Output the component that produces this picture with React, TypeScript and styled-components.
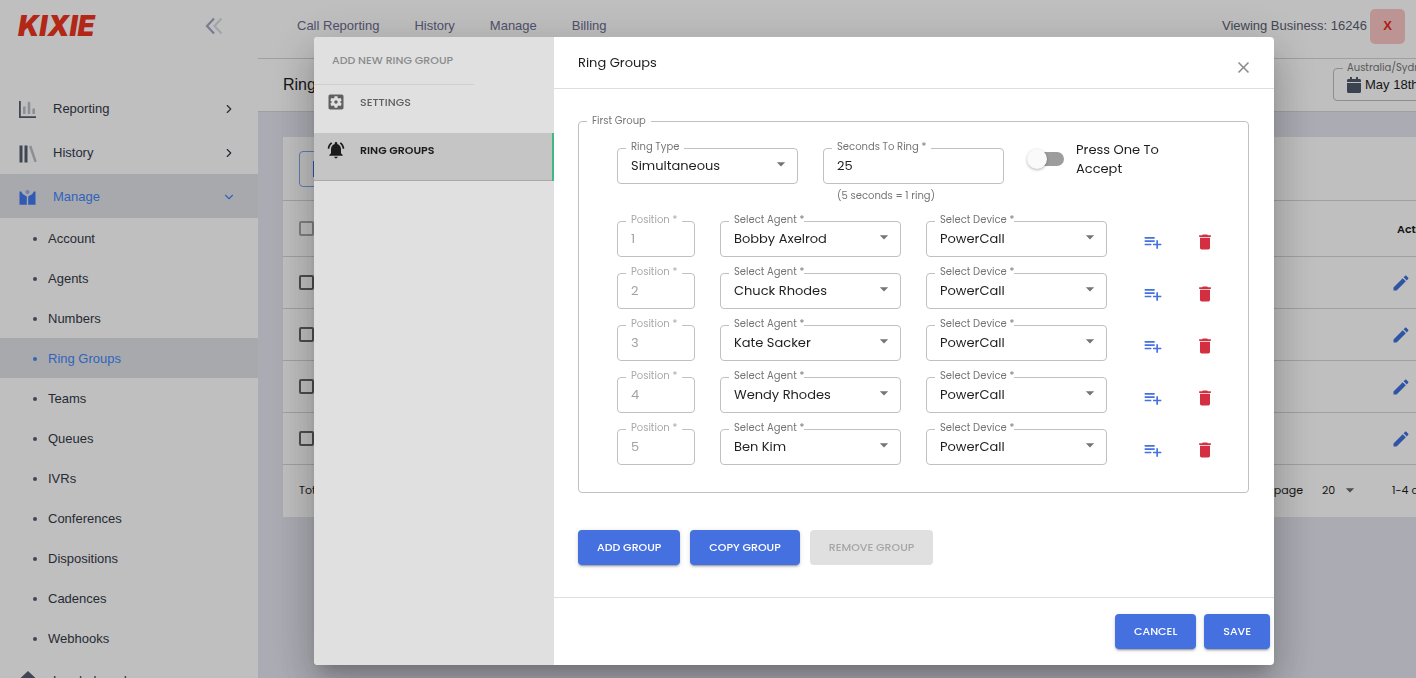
import React, { useState } from "react";
import styled, { createGlobalStyle } from "styled-components";
import { MdArrowDropDown, MdClose, MdDelete } from "react-icons/md";
import { FaCalendar } from "react-icons/fa";
import { ChevronDown, ChevronRight } from "lucide-react";

const body = `"Poppins", Inter, sans-serif`;
const nav = `"Helvetica Neue", "Liberation Sans", Arial, sans-serif`;

const GlobalStyle = createGlobalStyle`
  *, *::before, *::after { box-sizing: border-box; }
  html, body, #root { height: 100%; }
  body { margin: 0; overflow: hidden; background: #e4e4ef; font: 400 13px/20px ${nav}; color: #1d1d1d; }
  button, input, select { font: inherit; color: inherit; margin: 0; }
  button { border: 0; padding: 0; background: none; cursor: pointer; }
  svg { display: block; }
`;

const Page = styled.div`
  display: flex;
  height: 100vh;
  overflow: hidden;
`;

/* ---------- left navigation ---------- */

const Sidebar = styled.aside`
  flex: 0 0 258px;
  background: #fff;
  overflow: hidden;
`;

const Brand = styled.div`
  display: flex;
  align-items: center;
  justify-content: space-between;
  height: 52px;
  margin-bottom: 34px;
  padding: 0 35px 0 18px;
`;

const Logo = styled.a`
  font: italic 900 28px/32px Inter, sans-serif;
  color: #ee3420;
  text-decoration: none;
`;

const NavLink = styled.a<{ $active?: boolean }>`
  display: flex;
  align-items: center;
  height: 44px;
  padding: 2px 22px 0 18px;
  gap: 16px;
  color: ${(p) => (p.$active ? "#4285fa" : "#333a48")};
  background: ${(p) => (p.$active ? "#e0e2e7" : "transparent")};
  text-decoration: none;

  span { flex: 1; }
`;

const SubLink = styled.a<{ $active?: boolean }>`
  display: flex;
  align-items: center;
  gap: 11px;
  height: 40px;
  padding: 2px 0 0 33px;
  color: ${(p) => (p.$active ? "#4285fa" : "#333a48")};
  background: ${(p) => (p.$active ? "#e0e2e7" : "transparent")};
  text-decoration: none;

  &::before {
    content: "";
    width: 4px;
    height: 4px;
    border-radius: 50%;
    background: ${(p) => (p.$active ? "#4285fa" : "#555e70")};
  }
`;

/* ---------- page behind the dialog ---------- */

const Main = styled.main`
  flex: 1;
  min-width: 0;
  overflow: hidden;
`;

const TopBar = styled.header`
  display: flex;
  align-items: center;
  height: 59px;
  padding: 0 11px 6px 39px;
  background: #fff;
  border-bottom: 1px solid #d4d4d4;
`;

const TopNav = styled.nav`
  display: flex;
  flex: 1;
  gap: 35px;

  a { color: #6c6c90; text-decoration: none; white-space: nowrap; }
`;

const Business = styled.span`
  margin-right: 3px;
  color: #5a6072;
  white-space: nowrap;
`;

const ExitButton = styled.button`
  width: 35px;
  height: 35px;
  border-radius: 5px;
  background: #fdc6c6;
  color: #e42a1c;
  font-weight: 700;
`;

const TitleBar = styled.div`
  display: flex;
  align-items: center;
  justify-content: space-between;
  height: 53px;
  padding-left: 25px;
  margin-right: -60px;
  background: #fff;
  border-bottom: 1px solid #d4d4d4;

  h1 { margin: 0; font-size: 16px; font-weight: 400; }
`;

const DateBox = styled.fieldset`
  width: 143px;
  height: 40px;
  margin: 0 0 8px;
  padding: 0 0 0 12px;
  border: 1px solid #bcbcbc;
  border-radius: 4px;

  legend { padding: 0 4px; margin-left: -3px; font: 10px/14px ${body}; color: #777; white-space: nowrap; }
  button { display: flex; align-items: center; gap: 3px; white-space: nowrap; height: 20px; }
  svg { color: #515a6b; }
`;

const Card = styled.section`
  margin: 25px -60px 0 25px;
  background: #fff;
  font-family: ${body};
`;

const CardTools = styled.div`
  height: 64px;
  padding: 14px 16px;
  border-bottom: 1px solid #d6d6d6;
`;

const ToolButton = styled.button`
  display: flex;
  align-items: center;
  width: 120px;
  height: 36px;
  padding-left: 13px;
  border: 1px solid #80a8f0;
  border-radius: 4px;

  &::before { content: ""; width: 16px; height: 16px; background: #3f6fe0; }
`;

const Table = styled.table`
  width: 100%;
  border-collapse: separate;
  border-spacing: 0;
  table-layout: fixed;

  th, td { padding: 0; height: 52px; border-bottom: 1px solid #d6d6d6; text-align: left; }
  th { height: 56px; font-size: 11px; font-weight: 600; }
  th:first-child, td:first-child { padding-left: 16px; }
  th:last-child { width: 79px; }
  td:last-child button { display: block; margin-left: -6px; height: 20px; color: #4070dd; }
`;

const Tick = styled.input<{ $faint?: boolean }>`
  appearance: none;
  display: block;
  width: 15px;
  height: 15px;
  border: 2px solid ${(p) => (p.$faint ? "#aaa" : "#666")};
  border-radius: 2px;
`;

const CardFooter = styled.footer`
  display: flex;
  align-items: center;
  height: 52px;
  padding: 0 0 2px 16px;
  font-size: 11px;
  white-space: nowrap;

  > :first-child { flex: 1; }
  label { display: flex; align-items: center; gap: 19px; margin-right: 32px; }
  > :last-child { width: 84px; }
`;

const PageSize = styled.span`
  display: flex;
  align-items: center;
  position: relative;

  select { appearance: none; width: 38px; border: 0; padding: 0; background: none; }
  svg { position: absolute; right: 0; color: #666; pointer-events: none; }
`;

/* ---------- dialog ---------- */

const Overlay = styled.div`
  position: fixed;
  inset: 0;
  display: grid;
  place-items: center;
  padding: 24px 0 0 172px;
  background: rgba(0, 0, 0, 0.25);
`;

const Dialog = styled.section`
  display: flex;
  width: 960px;
  max-width: 100%;
  border-radius: 4px;
  overflow: hidden;
  background: #fff;
  font-family: ${body};
  box-shadow: 0 11px 15px -7px rgba(0, 0, 0, 0.2), 0 24px 38px 3px rgba(0, 0, 0, 0.14),
    0 9px 46px 8px rgba(0, 0, 0, 0.12);
`;

const Steps = styled.nav`
  flex: 0 0 240px;
  background: #e0e0e0;

  h2 {
    width: 160px;
    height: 48px;
    margin: 0;
    padding: 13px 0 0 18px;
    border-bottom: 1px solid #cfcfcf;
    font-size: 11px;
    line-height: 20px;
    font-weight: 500;
    color: #8a8a8a;
    white-space: nowrap;
  }
`;

const Step = styled.button<{ $active?: boolean }>`
  display: flex;
  align-items: flex-start;
  gap: 14px;
  width: 100%;
  height: 48px;
  padding: 7px 12px;
  font-size: 11px;
  font-weight: ${(p) => (p.$active ? 600 : 500)};
  color: ${(p) => (p.$active ? "#1b1b1b" : "#606060")};
  background: ${(p) => (p.$active ? "#c5c5c5" : "transparent")};
  border-right: ${(p) => (p.$active ? "2px solid #42b883" : "0")};
  box-shadow: ${(p) => (p.$active ? "inset 0 -1px #aaa" : "none")};
`;

const Panel = styled.div`
  flex: 1;
  min-width: 0;
`;

const PanelHeader = styled.header`
  display: flex;
  justify-content: space-between;
  height: 52px;
  padding: 16px 21px 0 24px;
  border-bottom: 1px solid #dedede;

  h3 { margin: 0; font-size: 13px; line-height: 20px; font-weight: 400; }
  button { height: 28px; color: #8c8c8c; }
`;

const PanelBody = styled.div`
  padding: 25px 25px 32px 24px;
`;

const Group = styled.fieldset`
  min-width: 0;
  margin: 0;
  padding: 20px 22px 21px 38px;
  border: 1px solid #c0c0c0;
  border-radius: 4px;

  > legend { margin-left: -30px; padding: 0 5px; font-size: 10px; line-height: 14px; color: #757575; }
`;

const SetupRow = styled.div`
  display: grid;
  grid-template-columns: 181fr 181fr 197fr;
  gap: 25px;
  margin-bottom: 17px;
`;

const AgentList = styled.div`
  display: grid;
  gap: 10px;
`;

const AgentRow = styled.div`
  display: grid;
  grid-template-columns: 78fr 181fr 181fr 94px;
  gap: 25px;
  height: 42px;
`;

const Field = styled.div<{ $disabled?: boolean; $tight?: boolean }>`
  position: relative;
  min-width: 0;
  color: ${(p) => (p.$disabled ? "#a3a3a3" : "#1f1f1f")};

  label {
    position: absolute;
    top: -8px;
    left: 9px;
    padding: 0 ${(p) => (p.$tight ? 0 : 5)}px 0 5px;
    background: #fff;
    font-size: 10px;
    line-height: 14px;
    color: ${(p) => (p.$disabled ? "#a8a8a8" : "#757575")};
    white-space: nowrap;
  }
  input, select {
    appearance: none;
    display: block;
    width: 100%;
    height: 36px;
    padding: 0 13px;
    border: 1px solid #c0c0c0;
    border-radius: 4px;
    background: #fff;
    opacity: 1;
  }
  svg { position: absolute; top: 6px; right: 7px; color: #757575; pointer-events: none; }
  p { margin: 4px 0 0 14px; font-size: 10px; line-height: 16px; color: #757575; }
`;

const SwitchLabel = styled.label`
  display: flex;
  align-items: flex-start;
  gap: 12px;
  padding-top: 1px;
  line-height: 19px;

  span { width: 100px; margin-top: -9px; }
`;

const Switch = styled.input`
  appearance: none;
  position: relative;
  flex: 0 0 35px;
  height: 20px;

  &::before {
    content: "";
    position: absolute;
    inset: 3px 0 3px 6px;
    border-radius: 7px;
    background: #9d9d9d;
  }
  &::after {
    content: "";
    position: absolute;
    top: 0;
    left: -2px;
    width: 20px;
    height: 20px;
    border-radius: 50%;
    background: #fafafa;
    box-shadow: 0 1px 3px rgba(0, 0, 0, 0.3);
  }
`;

const RowActions = styled.div`
  display: flex;
  justify-content: space-between;
`;

const IconButton = styled.button<{ $color: string }>`
  display: grid;
  place-items: center;
  width: 42px;
  height: 41px;
  color: ${(p) => p.$color};
`;

const ButtonBar = styled.div`
  display: flex;
  gap: 10px;
  margin-top: 37px;
`;

const PanelFooter = styled.footer`
  display: flex;
  justify-content: flex-end;
  gap: 8px;
  padding: 16px 4px;
  border-top: 1px solid #dedede;
`;

const Action = styled.button`
  height: 35px;
  padding: 0 19px 2px;
  border-radius: 4px;
  background: #4470e0;
  color: #fff;
  font-size: 11px;
  font-weight: 500;
  white-space: nowrap;
  box-shadow: 0 3px 1px -2px rgba(0, 0, 0, 0.2), 0 2px 2px rgba(0, 0, 0, 0.14), 0 1px 5px rgba(0, 0, 0, 0.12);

  &:disabled { background: #e0e0e0; color: #a6a6a6; box-shadow: none; }
`;

/* ---------- drawings ---------- */

const Glyph = ({ d }: { d: string }) => (
  <svg width="20" height="20" viewBox="0 0 24 24" fill="currentColor"><path d={d} /></svg>
);

const SettingsIcon = () => (
  <Glyph d="M12 10c-1.100 0-2 .9-2 2s.9 2 2 2 2-.9 2-2-.9-2-2-2zm7-7H5c-1.110 0-2 .9-2 2v14c0 1.100.89 2 2 2h14c1.110 0 2-.9 2-2V5c0-1.100-.9-2-2-2zm-1.750 9c0 .23-.02.46-.05.68l1.480 1.160c.13.11.17.3.08.45l-1.400 2.420c-.09.15-.27.21-.43.15l-1.740-.7c-.36.28-.76.51-1.180.69l-.26 1.850c-.03.17-.18.3-.35.3h-2.800c-.17 0-.32-.13-.35-.29l-.26-1.850c-.43-.18-.82-.41-1.180-.69l-1.740.7c-.16.06-.34 0-.43-.15l-1.400-2.420c-.09-.15-.05-.34.08-.45l1.480-1.160c-.03-.23-.05-.46-.05-.69 0-.23.02-.46.05-.68l-1.480-1.160c-.13-.11-.17-.3-.08-.45l1.400-2.420c.09-.15.27-.21.43-.15l1.740.7c.36-.28.76-.51 1.180-.69l.26-1.850c.03-.17.18-.3.35-.3h2.800c.17 0 .32.13.35.29l.26 1.850c.43.18.82.41 1.180.69l1.740-.7c.16-.06.34 0 .43.15l1.400 2.420c.09.15.05.34-.08.45l-1.480 1.160c.03.23.05.46.05.69z" />
);

const BellIcon = () => (
  <Glyph d="M7.580 4.080 6.150 2.650C3.750 4.480 2.170 7.300 2.030 10.500h2c.15-2.650 1.510-4.970 3.550-6.420zm12.390 6.420h2c-.15-3.200-1.730-6.020-4.120-7.850l-1.420 1.430c2.020 1.450 3.390 3.770 3.540 6.420zM18 11c0-3.070-1.640-5.640-4.500-6.320V4c0-.83-.67-1.500-1.500-1.500s-1.500.67-1.500 1.500v.68C7.630 5.360 6 7.920 6 11v5l-2 2v1h16v-1l-2-2v-5zm-6 11c.14 0 .27-.01.4-.04.65-.14 1.180-.58 1.440-1.180.1-.24.15-.5.15-.78h-4c.01 1.100.9 2 2.010 2z" />
);

const EditIcon = () => (
  <Glyph d="M3 17.250V21h3.750L17.810 9.940l-3.750-3.750L3 17.250zM20.710 7.040c.39-.39.39-1.020 0-1.410l-2.340-2.340c-.39-.39-1.020-.39-1.410 0l-1.830 1.830 3.750 3.750 1.830-1.830z" />
);

const AddRowIcon = () => (
  <Glyph d="M14 10H2v2h12v-2zm0-4H2v2h12V6zm4 8v-4h-2v4h-4v2h4v4h2v-4h4v-2h-4zM2 16h8v-2H2v2z" />
);

const CollapseIcon = () => (
  <svg width="18" height="18" viewBox="0 0 18 18" fill="none" strokeWidth="2.2">
    <path d="M9 1.500 2 9l7 7.500" stroke="#a3a3c4" />
    <path d="M16.500 1.500 9.500 9l7 7.500" stroke="#dadae4" />
  </svg>
);

const ReportIcon = () => (
  <svg width="19" height="19" viewBox="0 0 19 19">
    <path d="M1 1h1.800v15.200H18V18H1z" fill="#555e70" />
    <path d="M5 7.500a1.300 1.300 0 0 1 2.600 0V14H5zM9.700 3a1.300 1.300 0 0 1 2.600 0v11H9.700zM14.400 9.500a1.300 1.300 0 0 1 2.600 0V14h-2.600z" fill="#bbbfc6" />
  </svg>
);

const HistoryIcon = () => (
  <svg width="19" height="19" viewBox="0 0 19 19">
    <path d="M1.500 1.500h3v17h-3zM6.500 1.500h3v17h-3z" fill="#555e70" />
    <path d="m11 2.500 2.400-.9 5.400 15.800-2.400.9z" fill="#bbbfc6" />
  </svg>
);

const ManageIcon = () => (
  <svg width="19" height="19" viewBox="0 0 19 19">
    <path d="M1.500 3.500h1.700l1.500 2.600 4.100 2.400v8.200H1.500zM17.500 3.500h-1.700l-1.500 2.600-4.100 2.400v8.200h7.300z" fill="#4279f2" />
    <circle cx="9.500" cy="4" r="2.100" fill="#8fb2ee" />
  </svg>
);

const BoardIcon = () => (
  <svg width="19" height="22" viewBox="0 0 19 22">
    <path d="M10 1 19 9.500V22H1V9.500z" fill="#555e70" />
  </svg>
);

/* ---------- screen ---------- */

const subPages = [
  "Account", "Agents", "Numbers", "Ring Groups", "Teams", "Queues",
  "IVRs", "Conferences", "Dispositions", "Cadences", "Webhooks",
];

const agents = ["Bobby Axelrod", "Chuck Rhodes", "Kate Sacker", "Wendy Rhodes", "Ben Kim"];

type SelectFieldProps = { id: string; label: string; options: string[]; value: string; tight?: boolean };

function SelectField({ id, label, options, value, tight }: SelectFieldProps) {
  return (
    <Field $tight={tight}>
      <select id={id} defaultValue={value}>
        {options.map((o) => <option key={o}>{o}</option>)}
      </select>
      <label htmlFor={id}>{label}</label>
      <MdArrowDropDown size={20} />
    </Field>
  );
}

function RingGroupDialog() {
  const [pressOne, setPressOne] = useState(false);
  return (
    <Dialog role="dialog" aria-label="Ring Groups">
      <Steps>
        <h2>ADD NEW RING GROUP</h2>
        <Step><SettingsIcon />SETTINGS</Step>
        <Step $active><BellIcon />RING GROUPS</Step>
      </Steps>
      <Panel>
        <PanelHeader>
          <h3>Ring Groups</h3>
          <button aria-label="Close"><MdClose size={19} /></button>
        </PanelHeader>
        <PanelBody>
          <Group>
            <legend>First Group</legend>
            <SetupRow>
              <SelectField id="ring-type" label="Ring Type" value="Simultaneous" options={["Simultaneous"]} />
              <Field>
                <input id="seconds" defaultValue="25" />
                <label htmlFor="seconds">Seconds To Ring *</label>
                <p>(5 seconds = 1 ring)</p>
              </Field>
              <SwitchLabel>
                <Switch
                  type="checkbox"
                  role="switch"
                  checked={pressOne}
                  onChange={(e) => setPressOne(e.target.checked)}
                />
                <span>Press One To Accept</span>
              </SwitchLabel>
            </SetupRow>
            <AgentList>
              {agents.map((agent, i) => (
                <AgentRow key={agent}>
                  <Field $disabled>
                    <input id={`position-${i}`} value={i + 1} disabled readOnly />
                    <label htmlFor={`position-${i}`}>Position *</label>
                  </Field>
                  <SelectField id={`agent-${i}`} label="Select Agent *" value={agent} options={agents} tight />
                  <SelectField id={`device-${i}`} label="Select Device *" value="PowerCall" options={["PowerCall"]} tight />
                  <RowActions>
                    <IconButton $color="#4470e0" aria-label="Add agent"><AddRowIcon /></IconButton>
                    <IconButton $color="#d32f40" aria-label="Delete agent"><MdDelete size={20} /></IconButton>
                  </RowActions>
                </AgentRow>
              ))}
            </AgentList>
          </Group>
          <ButtonBar>
            <Action>ADD GROUP</Action>
            <Action>COPY GROUP</Action>
            <Action disabled>REMOVE GROUP</Action>
          </ButtonBar>
        </PanelBody>
        <PanelFooter>
          <Action>CANCEL</Action>
          <Action>SAVE</Action>
        </PanelFooter>
      </Panel>
    </Dialog>
  );
}

export default function App() {
  return (
    <>
      <GlobalStyle />
      <Page>
        <Sidebar>
          <Brand>
            <Logo href="#home">KIXIE</Logo>
            <button aria-label="Collapse menu"><CollapseIcon /></button>
          </Brand>
          <nav>
            <NavLink href="#reporting"><ReportIcon /><span>Reporting</span><ChevronRight size={14} /></NavLink>
            <NavLink href="#history"><HistoryIcon /><span>History</span><ChevronRight size={14} /></NavLink>
            <NavLink href="#manage" $active><ManageIcon /><span>Manage</span><ChevronDown size={14} /></NavLink>
            {subPages.map((name) => (
              <SubLink key={name} href={`#${name}`} $active={name === "Ring Groups"}>{name}</SubLink>
            ))}
            <NavLink href="#leaderboard"><BoardIcon /><span>Leaderboard</span></NavLink>
          </nav>
        </Sidebar>
        <Main>
          <TopBar>
            <TopNav>
              <a href="#call-reporting">Call Reporting</a>
              <a href="#call-history">History</a>
              <a href="#manage-account">Manage</a>
              <a href="#billing">Billing</a>
            </TopNav>
            <Business>Viewing Business: 16246</Business>
            <ExitButton>X</ExitButton>
          </TopBar>
          <TitleBar>
            <h1>Ring Groups</h1>
            <DateBox>
              <legend>Australia/Sydney</legend>
              <button><FaCalendar size={16} />May 18th, 2022</button>
            </DateBox>
          </TitleBar>
          <Card>
            <CardTools><ToolButton aria-label="Add ring group" /></CardTools>
            <Table>
              <thead>
                <tr>
                  <th><Tick type="checkbox" $faint aria-label="Select all" /></th>
                  <th>Actions</th>
                </tr>
              </thead>
              <tbody>
                {[1, 2, 3, 4].map((n) => (
                  <tr key={n}>
                    <td><Tick type="checkbox" aria-label={`Select row ${n}`} /></td>
                    <td><button aria-label={`Edit row ${n}`}><EditIcon /></button></td>
                  </tr>
                ))}
              </tbody>
            </Table>
            <CardFooter>
              <span>Total</span>
              <label>
                Rows per page
                <PageSize>
                  <select defaultValue="20"><option>20</option><option>50</option></select>
                  <MdArrowDropDown size={20} />
                </PageSize>
              </label>
              <span>1-4 of 4</span>
            </CardFooter>
          </Card>
        </Main>
      </Page>
      <Overlay><RingGroupDialog /></Overlay>
    </>
  );
}
